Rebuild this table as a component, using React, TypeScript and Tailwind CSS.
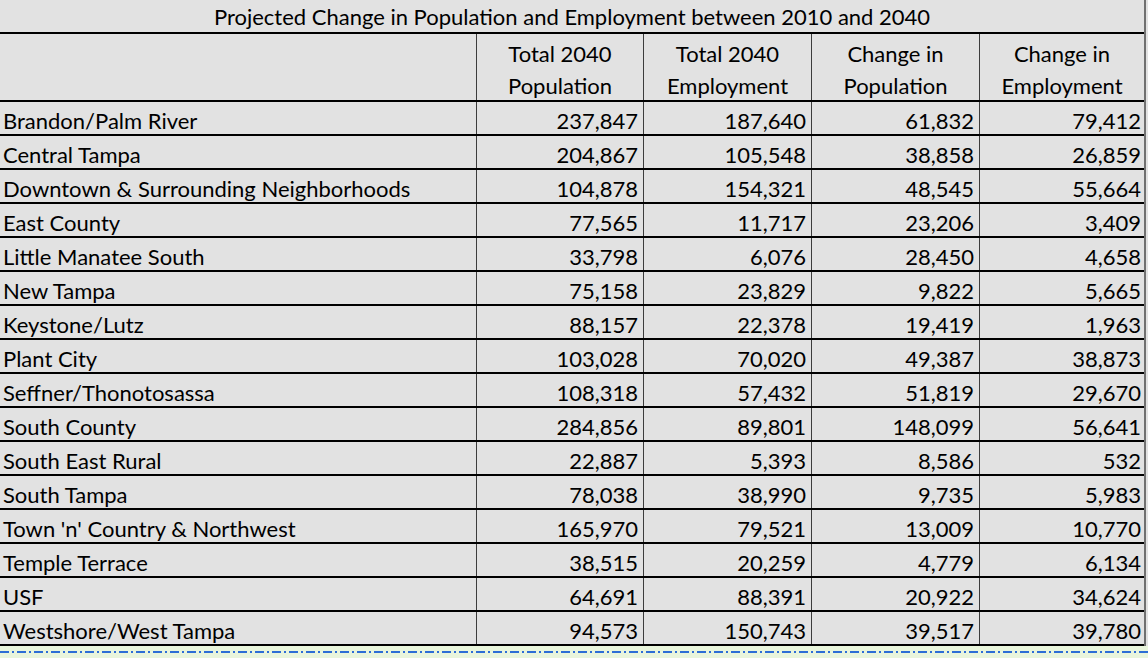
import React from "react";

// Hillsborough planning areas — 2040 projections sheet, redrawn as a grid.

type Row = [string, string, string, string, string];

const rows: Row[] = [
  ["Brandon/Palm River", "237,847", "187,640", "61,832", "79,412"],
  ["Central Tampa", "204,867", "105,548", "38,858", "26,859"],
  ["Downtown & Surrounding Neighborhoods", "104,878", "154,321", "48,545", "55,664"],
  ["East County", "77,565", "11,717", "23,206", "3,409"],
  ["Little Manatee South", "33,798", "6,076", "28,450", "4,658"],
  ["New Tampa", "75,158", "23,829", "9,822", "5,665"],
  ["Keystone/Lutz", "88,157", "22,378", "19,419", "1,963"],
  ["Plant City", "103,028", "70,020", "49,387", "38,873"],
  ["Seffner/Thonotosassa", "108,318", "57,432", "51,819", "29,670"],
  ["South County", "284,856", "89,801", "148,099", "56,641"],
  ["South East Rural", "22,887", "5,393", "8,586", "532"],
  ["South Tampa", "78,038", "38,990", "9,735", "5,983"],
  ["Town 'n' Country & Northwest", "165,970", "79,521", "13,009", "10,770"],
  ["Temple Terrace", "38,515", "20,259", "4,779", "6,134"],
  ["USF", "64,691", "88,391", "20,922", "34,624"],
  ["Westshore/West Tampa", "94,573", "150,743", "39,517", "39,780"],
];

const headers = [
  ["Total 2040", "Population"],
  ["Total 2040", "Employment"],
  ["Change in", "Population"],
  ["Change in", "Employment"],
];

// widths of the four number columns (first one holds the area names)
const numCols = ["w-[167px]", "w-[168px]", "w-[168px]", "flex-1"];

export default function App() {
  return (
    <div className="h-[658px] w-[1148px] overflow-hidden bg-[#e2e2e2] font-['Lato',sans-serif] text-[22px] text-black">
      <div className="w-[1146px] border-r-2 border-[#707070]">
        <div className="flex h-[34px] justify-center border-b-2 border-black pt-[1px] leading-[32px]">
          Projected Change in Population and Employment between 2010 and 2040
        </div>

        <div className="flex h-[68px] border-b-2 border-black">
          <div className="w-[476px]" />
          {headers.map(([a, b], i) => (
            <div
              key={i}
              className={`${numCols[i]} flex flex-col items-center border-l border-[#3c3c3c] pt-[4px] leading-[32px]`}
            >
              <span>{a}</span>
              <span>{b}</span>
            </div>
          ))}
        </div>

        {rows.map((r) => (
          <div key={r[0]} className="flex h-[34px] border-b-2 border-black">
            <div className="flex w-[476px] items-end pl-[3px] leading-[26px]">
              {r[0]}
            </div>
            {r.slice(1).map((v, i) => (
              <div
                key={i}
                className={`${numCols[i]} flex items-end justify-end border-l border-[#3c3c3c] leading-[26px] ${
                  i === 3 ? "pr-[3px]" : "pr-[5px]"
                }`}
              >
                {v}
              </div>
            ))}
          </div>
        ))}
      </div>

      {/* page-break strip peeking under the table */}
      <div className="h-[12px] w-full bg-[#e9f5dc] pt-[5px]">
        <div className="h-[2px] w-full bg-[repeating-linear-gradient(90deg,#2d6ed6_0_9px,transparent_9px_12px,#2d6ed6_12px_14px,transparent_14px_17px)]" />
      </div>
    </div>
  );
}
